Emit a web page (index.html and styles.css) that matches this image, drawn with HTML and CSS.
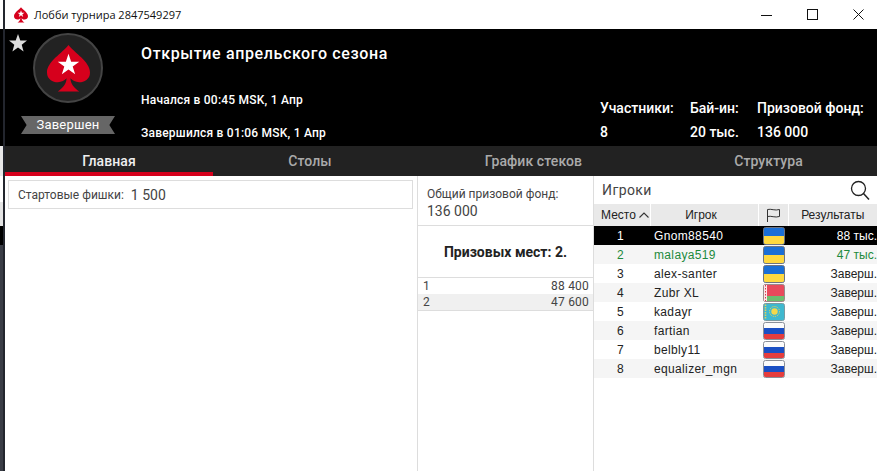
FILE: index.html
```
<!DOCTYPE html>
<html lang="ru">
<head>
<meta charset="utf-8">
<title>Лобби турнира 2847549297</title>
<link rel="stylesheet" href="styles.css">
</head>
<body>
<svg class="defs" width="0" height="0" aria-hidden="true">
  <defs>
    <symbol id="spade" viewBox="0 0 44 48">
      <path fill="#d6001c" d="M22 0C28 8 44 17 44 28C44 35 38 38 33 38C29 38 26 36 24 34C24 40 28 44 33 47.500L11 47.500C16 44 20 40 20 34C18 36 15 38 11 38C6 38 0 35 0 28C0 17 16 8 22 0Z"/>
      <polygon fill="#fff" points="22,9 24.700,17 33,17 26.300,22 28.800,30 22,25 15.200,30 17.700,22 11,17 19.300,17"/>
    </symbol>
    <symbol id="ua" viewBox="0 0 22 18">
      <rect x=".5" y=".5" width="21" height="17" rx="2" fill="#1b6fd6" stroke="#6e7480"/>
      <path d="M1 9H21V15.500A1.500 1.500 0 0 1 19.500 17H2.500A1.500 1.500 0 0 1 1 15.500Z" fill="#ffd940"/>
    </symbol>
    <symbol id="by" viewBox="0 0 22 18">
      <rect x=".5" y=".5" width="21" height="17" rx="2" fill="#e84a5c" stroke="#9a8a8a"/>
      <path d="M1 12H21V15.500A1.500 1.500 0 0 1 19.500 17H2.500A1.500 1.500 0 0 1 1 15.500Z" fill="#6dbd6f"/>
      <rect x="1" y="1" width="3" height="16" fill="#fbe6e8"/>
      <path d="M2.500 1V17" stroke="#d8394c" stroke-dasharray="1.500 1.500"/>
    </symbol>
    <symbol id="kz" viewBox="0 0 22 18">
      <rect x=".5" y=".5" width="21" height="17" rx="2" fill="#3fb8cf" stroke="#7a9aa2"/>
      <circle cx="11.500" cy="8.500" r="3.200" fill="#f4d84a"/>
      <circle cx="11.500" cy="8.500" r="5" fill="none" stroke="#f4d84a" stroke-dasharray="1 1"/>
      <path d="M2.500 1.500V16.500" stroke="#e6cf58" stroke-width="1.500" stroke-dasharray="1.500 1"/>
    </symbol>
    <symbol id="ru" viewBox="0 0 22 18">
      <rect x=".5" y=".5" width="21" height="17" rx="2" fill="#fbfbfb" stroke="#8a8f98"/>
      <rect x="1" y="6" width="20" height="6" fill="#1a4fc4"/>
      <path d="M1 12H21V15.500A1.500 1.500 0 0 1 19.500 17H2.500A1.500 1.500 0 0 1 1 15.500Z" fill="#e53d3d"/>
    </symbol>
  </defs>
</svg>
<div class="strip">
  <span class="s-title"></span><span class="s-head"></span><span class="s-tabs"></span><span class="s-a"></span><span class="s-b"></span><span class="s-c"></span><span class="s-d"></span>
</div>
<div class="window">
  <header class="titlebar">
    <svg class="title-icon"><use href="#spade"/></svg>
    <span class="title-text">Лобби турнира 2847549297</span>
    <div class="controls">
      <svg class="ctrl" viewBox="0 0 12 12"><path d="M0 6.500H11" stroke="#111" fill="none"/></svg>
      <svg class="ctrl" viewBox="0 0 12 12"><rect x=".5" y=".5" width="10" height="10" stroke="#111" fill="none"/></svg>
      <svg class="ctrl" viewBox="0 0 12 12"><path d="M.5 .5L10.500 10.500M10.500 .5L.5 10.500" stroke="#111" fill="none"/></svg>
    </div>
  </header>
  <section class="hero">
    <svg class="fav" viewBox="0 0 18 18"><polygon fill="#dcdcdc" points="9,0 11.300,6.400 18,6.600 12.700,10.800 14.600,17.500 9,13.600 3.400,17.500 5.300,10.800 0,6.600 6.700,6.400"/></svg>
    <div class="brand">
      <div class="badge"><svg class="badge-spade"><use href="#spade"/></svg></div>
      <div class="ribbon">Завершен</div>
    </div>
    <div class="info">
      <h1 class="name">Открытие апрельского сезона</h1>
      <p class="time">Начался в 00:45 MSK, 1 Апр</p>
      <p class="time">Завершился в 01:06 MSK, 1 Апр</p>
    </div>
    <div class="stats">
      <div class="stat stat-players"><span>Участники:</span><span>8</span></div>
      <div class="stat stat-buy"><span>Бай-ин:</span><span>20 тыс.</span></div>
      <div class="stat"><span>Призовой фонд:</span><span>136 000</span></div>
    </div>
  </section>
  <nav class="tabs">
    <span class="tab active">Главная</span>
    <span class="tab">Столы</span>
    <span class="tab">График стеков</span>
    <span class="tab">Структура</span>
  </nav>
  <main class="content">
    <section class="main-pane">
      <div class="chips"><span class="chips-label">Стартовые фишки:</span><span class="chips-value">1 500</span></div>
    </section>
    <section class="prize-pane">
      <div class="pool"><div class="pool-label">Общий призовой фонд:</div><div class="pool-value">136 000</div></div>
      <div class="places">Призовых мест: 2.</div>
      <div class="prizes">
        <div class="prize"><span>1</span><span>88 400</span></div>
        <div class="prize alt"><span>2</span><span>47 600</span></div>
      </div>
    </section>
    <section class="players-pane">
      <div class="players-top">
        <span class="players-title">Игроки</span>
        <svg class="search" viewBox="0 0 20 20"><circle cx="8.500" cy="8.500" r="7" fill="none" stroke="#222" stroke-width="1.300"/><path d="M13.500 13.500L19 19.500" stroke="#222" stroke-width="1.500" fill="none"/></svg>
      </div>
      <table class="players">
        <colgroup><col class="c-place"><col class="c-name"><col class="c-flag"><col class="c-res"></colgroup>
        <thead>
          <tr>
            <th class="h-place">Место <svg class="sort" viewBox="0 0 10 6"><path d="M.5 5.500L5 1L9.500 5.500" fill="none" stroke="#333" stroke-width="1.100"/></svg></th>
            <th class="h-name">Игрок</th>
            <th><svg class="flag-head" viewBox="0 0 14 14"><path d="M1.500 14V1.500C5 .5 9 3 13.500 1.500V8.500C9 10 5 7.500 1.500 8.500" fill="none" stroke="#333"/></svg></th>
            <th>Результаты</th>
          </tr>
        </thead>
        <tbody>
          <tr class="me"><td class="place">1</td><td>Gnom88540</td><td class="fl"><svg class="flag"><use href="#ua"/></svg></td><td class="res">88 тыс.</td></tr>
          <tr class="odd win"><td class="place">2</td><td>malaya519</td><td class="fl"><svg class="flag"><use href="#ua"/></svg></td><td class="res">47 тыс.</td></tr>
          <tr><td class="place">3</td><td>alex-santer</td><td class="fl"><svg class="flag"><use href="#ua"/></svg></td><td class="res">Заверш.</td></tr>
          <tr class="odd"><td class="place">4</td><td>Zubr XL</td><td class="fl"><svg class="flag"><use href="#by"/></svg></td><td class="res">Заверш.</td></tr>
          <tr><td class="place">5</td><td>kadayr</td><td class="fl"><svg class="flag"><use href="#kz"/></svg></td><td class="res">Заверш.</td></tr>
          <tr class="odd"><td class="place">6</td><td>fartian</td><td class="fl"><svg class="flag"><use href="#ru"/></svg></td><td class="res">Заверш.</td></tr>
          <tr><td class="place">7</td><td>belbly11</td><td class="fl"><svg class="flag"><use href="#ru"/></svg></td><td class="res">Заверш.</td></tr>
          <tr class="odd"><td class="place">8</td><td>equalizer_mgn</td><td class="fl"><svg class="flag"><use href="#ru"/></svg></td><td class="res">Заверш.</td></tr>
        </tbody>
      </table>
    </section>
  </main>
</div>
</body>
</html>
```
FILE: styles.css
```
* { box-sizing: border-box; }
html, body { height: 100%; overflow: hidden; }
body {
  margin: 0;
  display: flex;
  background: #fff;
  color: #222;
  font-family: Roboto, "Liberation Sans", sans-serif;
}
.defs { display: block; flex: none; }

.strip {
  flex: none;
  width: 5px;
  display: flex;
  flex-direction: column;
  border-right: 2px solid #23262e;
}
.strip span { display: block; }
.s-title { height: 29px; background: #fff; }
.s-head { height: 117px; background: #000; }
.s-tabs { height: 30px; background: #e8e8e8; }
.s-a { height: 26px; background: #fff; }
.s-b { height: 24px; background: #e4e4e4; }
.s-c { height: 19px; background: #000; }
.s-d { flex: 1; background: #3a3d46; }

.window { flex: 1; min-width: 0; display: flex; flex-direction: column; }

.titlebar { height: 29px; flex: none; display: flex; align-items: center; padding-left: 9px; background: #fff; }
.title-icon { width: 14px; height: 16px; margin-right: 6px; flex: none; }
.title-text { font: 11px "Open Sans", "Noto Sans", sans-serif; color: #111; }
.controls { margin-left: auto; display: flex; gap: 34px; padding-right: 12px; }
.ctrl { width: 12px; height: 12px; display: block; }

.hero { height: 117px; flex: none; position: relative; display: flex; background: #000; color: #fff; font-weight: 500; }
.fav { position: absolute; left: 4px; top: 5px; width: 18px; height: 18px; }
.brand { width: 136px; flex: none; padding: 4px 0 0 16px; }
.badge {
  width: 70px; height: 70px; margin-left: 12px;
  border-radius: 50%; background: #222; border: 2px solid #444;
  display: flex; align-items: center; justify-content: center;
}
.badge-spade { width: 43px; height: 47px; }
.ribbon {
  width: 94px; height: 18px; margin-top: 13px;
  background: #666; color: #fff;
  font-size: 13px; font-weight: 400; line-height: 18px; text-align: center; letter-spacing: .2px;
  clip-path: polygon(0 0, 100% 0, 94% 50%, 100% 100%, 0 100%, 6% 50%);
}
.info { flex: none; width: 459px; }
.name { margin: 15px 0 30px; font-size: 16px; font-weight: 500; line-height: 19px; letter-spacing: .62px; }
.time { margin: 0 0 19px; font-size: 12px; font-weight: 500; line-height: 14px; letter-spacing: .22px; }
.stats { display: flex; font-size: 14px; padding-top: 72px; }
.stat { display: flex; flex-direction: column; gap: 9px; line-height: 15px; white-space: nowrap; }
.stat-players { width: 90px; }
.stat-buy { width: 67px; }

.tabs { height: 30px; flex: none; display: grid; grid-template-columns: 208px 194px 253px 1fr; grid-auto-rows: 30px; background: #222; }
.tab { color: #aaa; font-size: 14px; font-weight: 500; text-align: center; line-height: 31px; letter-spacing: .1px; }
.tab.active { color: #eee; border-bottom: 4px solid #d6001c; }

.content { flex: 1; min-height: 0; display: flex; background: #fff; }
.main-pane { width: 412px; flex: none; padding: 4px 4px 0 3px; }
.chips {
  height: 29px; border: 1px solid #ddd; padding-left: 9px;
  display: flex; align-items: center; gap: 7px;
}
.chips-label { font-size: 12px; color: #444; }
.chips-value { font-size: 14px; color: #444; }

.prize-pane { width: 177px; flex: none; border-left: 1px solid #ddd; border-right: 1px solid #ddd; }
.pool { height: 50px; padding: 11px 0 0 9px; border-bottom: 1px solid #ddd; color: #444; }
.pool-label { font-size: 12px; line-height: 15px; }
.pool-value { font-size: 14px; line-height: 19px; }
.places { height: 52px; font-size: 14px; font-weight: 700; color: #222; display: flex; align-items: center; justify-content: center; border-bottom: 1px solid #ddd; }
.prizes { border-bottom: 1px solid #ddd; }
.prize { height: 16px; display: flex; justify-content: space-between; padding: 0 4px 0 5px; font-size: 12px; line-height: 16px; color: #444; letter-spacing: .2px; }
.prize.alt { background: #f0f0f0; }

.players-pane { flex: 1; min-width: 0; }
.players-top { height: 28px; display: flex; align-items: center; justify-content: space-between; padding: 0 7px 0 8px; }
.players-title { font-size: 14px; color: #444; letter-spacing: .4px; }
.search { width: 20px; height: 20px; }
.players { width: 283px; table-layout: fixed; border-collapse: collapse; font-family: "Liberation Sans", sans-serif; font-size: 12px; }
.c-place { width: 56px; }
.c-name { width: 108px; }
.c-flag { width: 30px; }
.players th {
  height: 22px; padding: 0; font-weight: 400; color: #222; background: #e9e9e9;
  border-left: 1px solid #fff; white-space: nowrap; text-align: center;
}
.players th:first-child { border-left: 0; }
.players .h-place { text-align: left; padding-left: 7px; }
.players .h-name { padding-right: 6px; }
.sort { width: 10px; height: 6px; margin-left: 0; vertical-align: 1px; }
.flag-head { width: 14px; height: 14px; display: block; margin: 0 auto; }
.players td { height: 19px; padding: 0; color: #222; white-space: nowrap; letter-spacing: .35px; }
.players .place { text-align: center; padding-right: 3px; }
.players td:nth-child(2) { padding-left: 4px; }
.players .fl { text-align: left; padding-left: 5px; line-height: 0; }
.players .res { text-align: right; letter-spacing: 0; }
.flag { width: 22px; height: 18px; display: block; }
.odd td { background: #f5f5f5; }
.me td { background: #000; color: #fff; }
.win td { color: #1d8a3c; }
```
